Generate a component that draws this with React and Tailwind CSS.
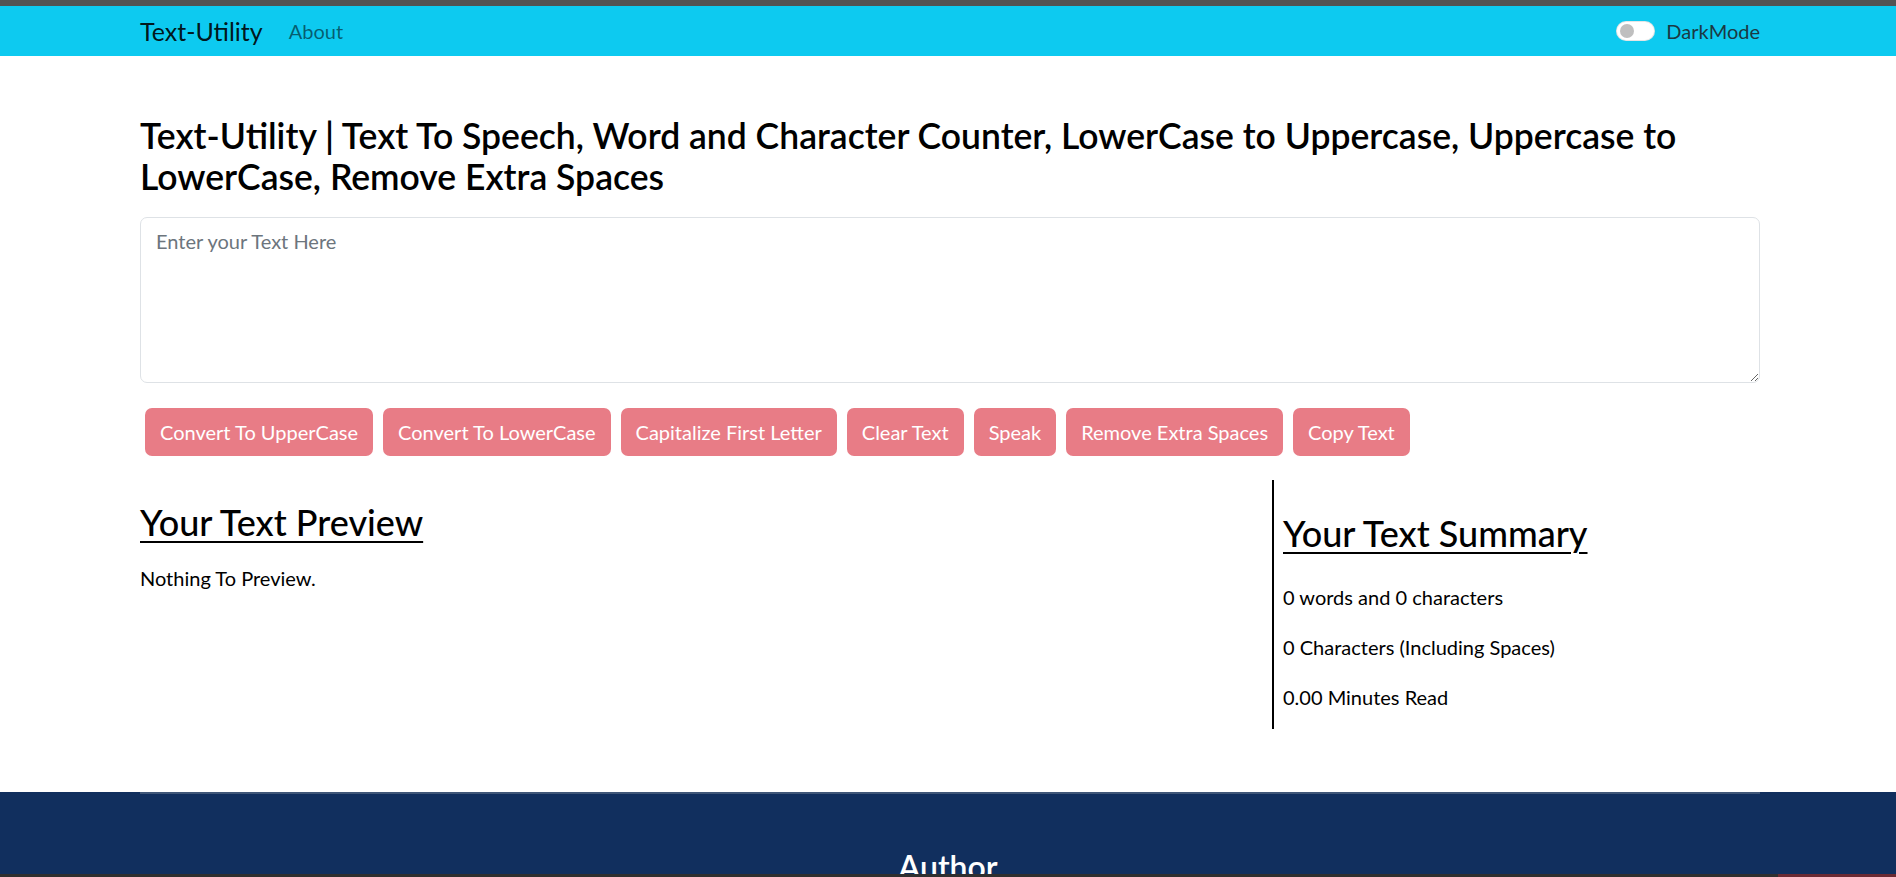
import {useState} from "react";

const buttons = [
  "Convert To UpperCase",
  "Convert To LowerCase",
  "Capitalize First Letter",
  "Clear Text",
  "Speak",
  "Remove Extra Spaces",
  "Copy Text",
];

function Navbar() {
  return (
    <nav className="h-[50px] bg-[#0dcaf0] flex items-center">
      <div className="w-[1620px] ml-[140px] flex items-center">
        <span className="text-[25px] leading-[30px] text-black/90">Text-Utility</span>
        <span className="ml-[26px] text-[20px] leading-[30px] text-black/55">About</span>
        <div className="ml-auto flex items-center">
          <div className="w-[39px] h-[20px] rounded-full bg-white border border-black/10 flex items-center px-[3px]">
            <div className="w-[14px] h-[14px] rounded-full bg-[#bfbfbf]" />
          </div>
          <span className="ml-[11px] text-[20px] leading-[30px] text-[#1b3943]">DarkMode</span>
        </div>
      </div>
    </nav>
  );
}

export default function App() {
  const [text, setText] = useState("");

  return (
    <div className="h-[877px] overflow-hidden flex flex-col bg-white font-['Lato',sans-serif] text-[#212529]">
      <div className="h-[6px] bg-[#535353]" />
      <Navbar />

      <main className="w-[1620px] ml-[140px]">
        <h1 className="mt-[59px] mb-[20px] text-[35.5px] leading-[41px] font-semibold text-black">
          Text-Utility | Text To Speech, Word and Character Counter, LowerCase to Uppercase, Uppercase to LowerCase, Remove Extra Spaces
        </h1>
        <textarea
          className="block w-full h-[166px] mb-[20px] border border-[#dee2e6] rounded-[7px] px-[15px] py-[8px] text-[20px] leading-[30px] placeholder:text-[#6c757d] outline-none"
          placeholder="Enter your Text Here"
          value={text}
          onChange={(e) => setText(e.target.value)}
        />
        <div className="flex flex-wrap">
          {buttons.map((b) => (
            <button
              key={b}
              disabled
              className="m-[5px] h-[48px] px-[15px] rounded-[7px] bg-[#e87c86] text-white text-[20px] leading-[30px]"
            >
              {b}
            </button>
          ))}
        </div>

        <div className="flex mt-[19px]">
          <div className="w-[1132px] pt-[18px]">
            <h2 className="text-[36px] leading-[48px] font-medium text-black underline underline-offset-[5px] decoration-2 mb-[17px]">
              Your Text Preview
            </h2>
            <p className="text-[20px] leading-[30px] text-black">Nothing To Preview.</p>
          </div>
          <div className="border-l-2 border-black pl-[9px] pt-[29px] pb-[17px]">
            <h2 className="text-[36px] leading-[48px] font-medium text-black underline underline-offset-[5px] decoration-2 mb-[25px]">
              Your Text Summary
            </h2>
            <p className="text-[20px] leading-[30px] text-black mb-[20px]">0 words and 0 characters</p>
            <p className="text-[20px] leading-[30px] text-black mb-[20px]">0 Characters (Including Spaces)</p>
            <p className="text-[20px] leading-[30px] text-black">0.00 Minutes Read</p>
          </div>
        </div>
      </main>

      <footer className="mt-auto h-[82px] bg-[#112f5e] overflow-hidden">
        <div className="w-[1620px] ml-[140px] h-[2px] bg-[#3f5678]" />
        <h3 className="pt-[54px] text-center text-[32px] leading-[38px] font-semibold text-white">Author</h3>
      </footer>
      <div className="h-[3px] flex">
        <div className="flex-1 bg-[#2f2f2f]" />
        <div className="w-[118px] bg-[#6b2a33]" />
      </div>
    </div>
  );
}
